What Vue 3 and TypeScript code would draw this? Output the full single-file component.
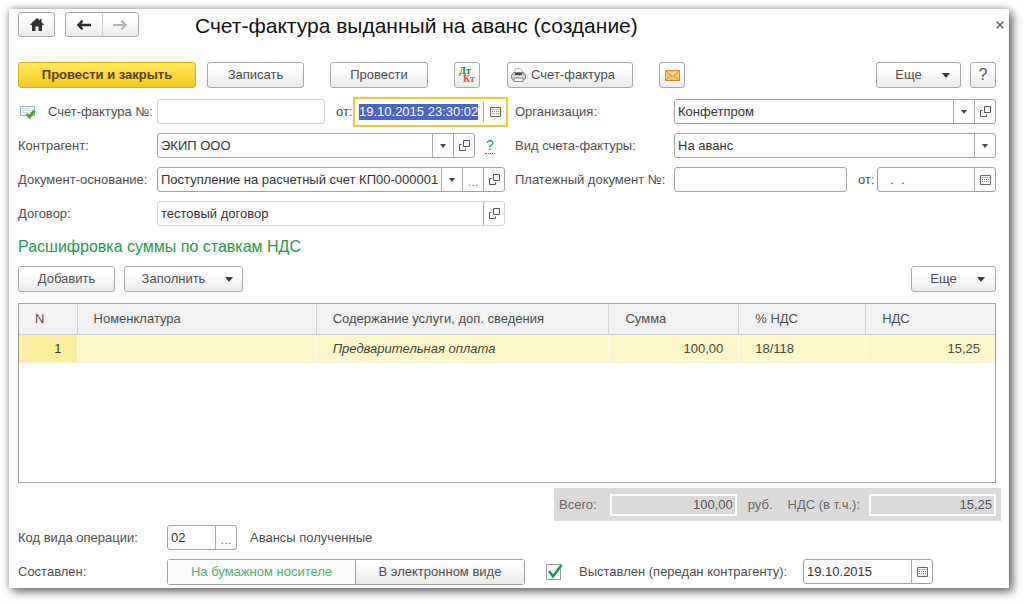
<script setup lang="ts">
import { onMounted, ref } from 'vue'

interface Row {
  n: number
  item: string
  content: string
  sum: string
  rate: string
  vat: string
}

const rows: Row[] = [
  { n: 1, item: '', content: 'Предварительная оплата', sum: '100,00', rate: '18/118', vat: '15,25' },
]

const invoiceNo = ref('')
const invoiceDate = ref('19.10.2015 23:30:02')
const organization = ref('Конфетпром')
const partner = ref('ЭКИП ООО')
const kind = ref('На аванс')
const basis = ref('Поступление на расчетный счет КП00-000001 от 19.10.2015')
const paymentNo = ref('')
const paymentDate = ref('  .  .')
const contract = ref('тестовый договор')
const opCode = ref('02')
const medium = ref('paper')
const issued = ref(true)
const issuedDate = ref('19.10.2015')

const dateInput = ref<HTMLInputElement | null>(null)

onMounted(() => {
  dateInput.value?.focus()
  dateInput.value?.select()
})
</script>

<template>
  <svg class="sprite" width="0" height="0" aria-hidden="true">
    <symbol id="i-open" viewBox="0 0 11 11">
      <path d="M4.5 .5h6v6h-6z M2.500 4.500h-2v6h6v-2" fill="none" stroke="#555" />
    </symbol>
    <symbol id="i-calendar" viewBox="0 0 11 10">
      <path d="M.5 .5h10v9H.5z" fill="#fff" stroke="#666" />
      <path d="M1 2.500h9" stroke="#bbb" />
      <path d="M2 4.500h7M2 6.500h7" stroke="#777" stroke-dasharray="1 1" />
    </symbol>
    <symbol id="i-drop" viewBox="0 0 6 4">
      <path d="M0 0h6L3 4z" fill="#444" />
    </symbol>
    <symbol id="i-caret" viewBox="0 0 8 5">
      <path d="M0 0h8L4 5z" fill="#3a3a3a" />
    </symbol>
  </svg>

  <main class="window">
    <header class="head">
      <button class="btn home" type="button" aria-label="Начальная страница">
        <svg width="14" height="13" viewBox="0 0 14 13">
          <path d="M7 0 0 6.500l1 1L2 6.700V13h3.500V8.500h3V13H12V6.700l1 .8 1-1-2.500-2.300V1H9.800v1.600z" fill="#333" />
        </svg>
      </button>
      <div class="history">
        <button type="button" aria-label="Назад">
          <svg width="14" height="10" viewBox="0 0 14 10">
            <path d="M5.500 .7 1.500 5l4 4.300M1.500 5H14" fill="none" stroke="#2b2b2b" stroke-width="2.500" />
          </svg>
        </button>
        <button type="button" aria-label="Вперед">
          <svg width="14" height="10" viewBox="0 0 14 10">
            <path d="M8.500 .7 12.500 5l-4 4.300M12.500 5H0" fill="none" stroke="#b5b5b5" stroke-width="2.200" />
          </svg>
        </button>
      </div>
      <h1>Счет-фактура выданный на аванс (создание)</h1>
      <button class="close" type="button" aria-label="Закрыть">
        <svg width="8" height="8" viewBox="0 0 8 8">
          <path d="M.7 .7l6.600 6.600M7.300 .7.7 7.300" stroke="#555" stroke-width="1.300" />
        </svg>
      </button>
    </header>

    <div class="body">
      <div class="toolbar">
        <button class="btn primary" type="button">Провести и закрыть</button>
        <button class="btn save" type="button">Записать</button>
        <button class="btn post" type="button">Провести</button>
        <button class="btn square" type="button" aria-label="Проводки Дт Кт">
          <svg width="18" height="18" viewBox="0 0 18 18" font-family="Liberation Serif, serif" font-weight="bold" font-size="10">
            <text x="1" y="8" fill="#1d8a1d">Дт</text>
            <text x="5" y="16" fill="#f04848">Кт</text>
          </svg>
        </button>
        <button class="btn print" type="button">
          <svg width="15" height="14" viewBox="0 0 15 14">
            <path d="M4 .5h5l2 2V6H4z" fill="#fff" stroke="#b5b5b5" />
            <path d="M.5 7 2.500 4.500h10l2 2.500v3.500l-2 1.500h-10l-2-1.500z" fill="#c4c0bc" stroke="#8b8783" />
            <path d="M4 6h7" stroke="#4b4744" stroke-width="2" />
            <path d="M1 8.500h13" stroke="#e9e5e0" />
            <path d="M3.500 10h8l1 3.500h-10z" fill="#f8f8f8" stroke="#8f8f8f" />
          </svg>
          Счет-фактура
        </button>
        <button class="btn square" type="button" aria-label="Отправить по почте">
          <svg width="15" height="11" viewBox="0 0 15 11">
            <path d="M.5 .5h14v10H.5z" fill="#f9cb62" stroke="#c98a25" />
            <path d="M1 10l5-4.500M14 10 9 5.500" stroke="#d9982f" />
            <path d="M1 1l6.500 5.500L14 1z" fill="#fee6a1" stroke="#d9982f" />
          </svg>
        </button>
        <span class="spacer"></span>
        <button class="btn more" type="button">Еще <svg width="8" height="5"><use href="#i-caret" /></svg></button>
        <button class="btn square help" type="button">?</button>
      </div>

      <div class="form">
        <div class="line">
          <span class="label with-icon">
            <svg width="16" height="14" viewBox="0 0 16 14">
              <path d="M.5 1.500h14v9H.5z" fill="#f3f7f9" stroke="#9bb0bd" />
              <path d="M2 3.500h9M2 5.500h8M2 7.500h5" stroke="#d5e0e6" />
              <path d="M6.500 9 9.500 12 14.500 5.500" fill="none" stroke="#4fa32f" stroke-width="3" />
            </svg>
            <label for="no">Счет-фактура №:</label>
          </span>
          <span class="field dim number"><input id="no" v-model="invoiceNo" type="text" /></span>
          <label class="from" for="date">от:</label>
          <span class="focus">
            <input id="date" ref="dateInput" v-model="invoiceDate" type="text" />
            <button type="button" aria-label="Выбрать дату"><svg width="11" height="10"><use href="#i-calendar" /></svg></button>
          </span>
        </div>
        <div class="line">
          <label class="label wide" for="org">Организация:</label>
          <span class="field">
            <input id="org" v-model="organization" type="text" />
            <button type="button" aria-label="Список организаций"><svg width="6" height="4"><use href="#i-drop" /></svg></button>
            <button type="button" aria-label="Открыть организацию"><svg width="11" height="11"><use href="#i-open" /></svg></button>
          </span>
        </div>

        <div class="line">
          <label class="label" for="partner">Контрагент:</label>
          <span class="field">
            <input id="partner" v-model="partner" type="text" />
            <button type="button" aria-label="Список контрагентов"><svg width="6" height="4"><use href="#i-drop" /></svg></button>
            <button type="button" aria-label="Открыть контрагента"><svg width="11" height="11"><use href="#i-open" /></svg></button>
          </span>
          <span class="hint"><a href="#">?</a></span>
        </div>
        <div class="line">
          <label class="label wide" for="kind">Вид счета-фактуры:</label>
          <span class="field">
            <select id="kind" v-model="kind"><option>На аванс</option></select>
            <span class="arrow"><svg width="6" height="4"><use href="#i-drop" /></svg></span>
          </span>
        </div>

        <div class="line">
          <label class="label" for="basis">Документ-основание:</label>
          <span class="field">
            <input id="basis" v-model="basis" type="text" />
            <button type="button" aria-label="Список документов"><svg width="6" height="4"><use href="#i-drop" /></svg></button>
            <button class="dots" type="button" aria-label="Выбрать документ">...</button>
            <button type="button" aria-label="Открыть документ"><svg width="11" height="11"><use href="#i-open" /></svg></button>
          </span>
        </div>
        <div class="line">
          <label class="label wide" for="payno">Платежный документ №:</label>
          <span class="field"><input id="payno" v-model="paymentNo" type="text" /></span>
          <label class="from" for="paydate">от:</label>
          <span class="field paydate">
            <input id="paydate" v-model="paymentDate" type="text" />
            <button type="button" aria-label="Выбрать дату платежа"><svg width="11" height="10"><use href="#i-calendar" /></svg></button>
          </span>
        </div>

        <div class="line">
          <label class="label" for="contract">Договор:</label>
          <span class="field dim">
            <input id="contract" v-model="contract" type="text" />
            <button type="button" aria-label="Открыть договор"><svg width="11" height="11"><use href="#i-open" /></svg></button>
          </span>
        </div>
      </div>

      <h2>Расшифровка суммы по ставкам НДС</h2>

      <div class="toolbar">
        <button class="btn add" type="button">Добавить</button>
        <button class="btn fill" type="button">Заполнить <svg width="8" height="5"><use href="#i-caret" /></svg></button>
        <span class="spacer"></span>
        <button class="btn more" type="button">Еще <svg width="8" height="5"><use href="#i-caret" /></svg></button>
      </div>

      <div class="grid">
        <table>
          <colgroup>
            <col class="c-n" /><col class="c-item" /><col class="c-content" />
            <col class="c-sum" /><col class="c-rate" /><col class="c-vat" />
          </colgroup>
          <thead>
            <tr>
              <th>N</th>
              <th>Номенклатура</th>
              <th>Содержание услуги, доп. сведения</th>
              <th>Сумма</th>
              <th>% НДС</th>
              <th>НДС</th>
            </tr>
          </thead>
          <tbody>
            <tr v-for="row in rows" :key="row.n">
              <td class="num current">{{ row.n }}</td>
              <td>{{ row.item }}</td>
              <td class="italic">{{ row.content }}</td>
              <td class="num">{{ row.sum }}</td>
              <td>{{ row.rate }}</td>
              <td class="num">{{ row.vat }}</td>
            </tr>
          </tbody>
        </table>
      </div>
    </div>

    <div class="totals">
      <label for="total">Всего:</label>
      <input id="total" class="t-sum" type="text" value="100,00" readonly />
      <span class="rub">руб.</span>
      <label for="vat">НДС (в т.ч.):</label>
      <input id="vat" class="t-vat" type="text" value="15,25" readonly />
    </div>

    <div class="footer">
      <div class="line">
        <label class="label foot" for="code">Код вида операции:</label>
        <span class="field code">
          <input id="code" v-model="opCode" type="text" />
          <button class="dots" type="button" aria-label="Выбрать код">...</button>
        </span>
        <span class="note">Авансы полученные</span>
      </div>
      <div class="line">
        <span id="medium" class="label foot">Составлен:</span>
        <div class="segments" role="radiogroup" aria-labelledby="medium">
          <label class="seg"><input v-model="medium" type="radio" value="paper" />На бумажном носителе</label>
          <label class="seg second"><input v-model="medium" type="radio" value="digital" />В электронном виде</label>
        </div>
        <span class="check">
          <input id="issued" v-model="issued" type="checkbox" />
          <svg v-if="issued" width="17" height="17" viewBox="0 0 17 17">
            <path d="M3 8l4 5.500L15.500 2" fill="none" stroke="#10984f" stroke-width="2.500" />
          </svg>
        </span>
        <label class="issued" for="issued">Выставлен (передан контрагенту):</label>
        <span class="field issue-date">
          <input v-model="issuedDate" type="text" aria-label="Дата выставления" />
          <button type="button" aria-label="Выбрать дату выставления"><svg width="11" height="10"><use href="#i-calendar" /></svg></button>
        </span>
      </div>
    </div>
  </main>
</template>

<style>
body {
  background: #fff;
}
</style>

<style scoped>
.sprite {
  position: absolute;
}

.window {
  box-sizing: border-box;
  margin: 9px 15px 15px 9px;
  padding-bottom: 4px;
  background: #fff;
  box-shadow: 4px 4px 9px rgba(0, 0, 0, 0.5), 0 0 7px rgba(0, 0, 0, 0.35);
  color: #4d4d4d;
  font: 13px/16px "Liberation Sans", Arial, sans-serif;
}

.window * {
  box-sizing: border-box;
}

button,
input,
select {
  margin: 0;
  padding: 0;
  border: 0;
  border-radius: 0;
  outline: 0;
  background: none;
  color: inherit;
  font: inherit;
}

svg {
  flex: none;
  display: block;
}

.head {
  display: flex;
  align-items: flex-start;
  padding: 3px 5px 0 9px;
}

.btn {
  display: flex;
  align-items: center;
  justify-content: center;
  flex: none;
  height: 26px;
  border: 1px solid #a8a8a8;
  border-radius: 3px;
  background: linear-gradient(#fff 20%, #ebebeb);
}

.home {
  width: 37px;
  height: 25px;
}

.history {
  display: flex;
  width: 74px;
  height: 25px;
  margin-left: 10px;
  border: 1px solid #a8a8a8;
  border-radius: 3px;
  background: linear-gradient(#fff 20%, #ebebeb);
}

.history button {
  display: flex;
  flex: 1;
  align-items: center;
  justify-content: center;
}

.history button + button {
  border-left: 1px solid #d0d0d0;
}

h1 {
  flex: 1;
  margin: 0 0 0 56px;
  color: #111;
  font-size: 21px;
  font-weight: 400;
  line-height: 28px;
}

.close {
  width: 8px;
  height: 25px;
}

.body {
  padding: 0 13px 0 9px;
}

.toolbar {
  display: flex;
}

.head + .body > .toolbar:first-child {
  margin-top: 22px;
}

.primary {
  width: 178px;
  border-color: #d9ab1f;
  background: linear-gradient(#ffe95e, #f8c91d);
  color: #54430c;
  font-weight: 700;
}

.save {
  width: 97px;
  margin-left: 11px;
}

.post {
  width: 98px;
  margin-left: 26px;
}

.square {
  width: 26px;
  margin-left: 26px;
}

.print {
  gap: 5px;
  width: 126px;
  margin-left: 27px;
  padding-right: 14px;
}

.spacer {
  flex: 1;
}

.more {
  gap: 20px;
  width: 85px;
  padding-left: 8px;
}

.help {
  margin-left: 9px;
  font-size: 16px;
}

.form {
  display: grid;
  grid-template-columns: 487fr 481fr;
  gap: 9px 10px;
  margin-top: 11px;
}

.line {
  display: flex;
  align-items: center;
  min-width: 0;
  height: 25px;
}

.label {
  flex: none;
  width: 139px;
  white-space: nowrap;
}

.label.wide {
  width: 159px;
}

.label.foot {
  width: 149px;
}

.with-icon {
  display: flex;
  align-items: center;
  gap: 12px;
  padding-left: 2px;
}

.field {
  display: flex;
  flex: 1;
  min-width: 0;
  height: 25px;
  border: 1px solid #a0a0a0;
  border-radius: 3px;
  color: #333;
}

.field.dim {
  border-color: #d2d2d2;
}

.field input,
.field select {
  flex: 1;
  width: 0;
  min-width: 0;
  padding: 0 0 0 3px;
  appearance: none;
}

.field button,
.arrow {
  display: flex;
  flex: none;
  align-items: center;
  justify-content: center;
  width: 21px;
  border-left: 1px solid #a8a8a8;
}

.field .dots {
  padding-top: 4px;
  color: #777;
}

.from {
  flex: none;
  width: 30px;
  padding-left: 11px;
}

.focus {
  display: flex;
  flex: none;
  align-self: center;
  width: 155px;
  height: 30px;
  margin: 0 -3px 0 -2px;
  padding: 3px 0;
  border: 2px solid #efc93c;
  background: #fff;
}

.focus input {
  flex: 1;
  width: 0;
  min-width: 0;
  padding-left: 4px;
}

.focus input::selection {
  background: #4a63c4;
  color: #fff;
}

.focus button {
  display: flex;
  align-items: center;
  justify-content: center;
  width: 23px;
  border-left: 1px solid #a8a8a8;
}

.hint {
  flex: none;
  width: 30px;
  padding-left: 10px;
}

.hint a {
  padding: 0 1px;
  border-bottom: 1px dotted #1788a8;
  color: #1788a8;
  font-size: 14px;
  text-decoration: none;
}

.paydate {
  flex: none;
  width: 119px;
}

.field.paydate input {
  padding-left: 5px;
  white-space: pre;
}

h2 {
  margin: 10px 0 9px;
  color: #1a9c4c;
  font-size: 16px;
  font-weight: 400;
  line-height: 21px;
}

.add {
  width: 97px;
}

.fill {
  gap: 20px;
  width: 119px;
  margin-left: 9px;
  padding-left: 8px;
}

.grid {
  min-height: 180px;
  margin-top: 11px;
  border: 1px solid #a0a0a0;
}

table {
  width: 100%;
  border-collapse: separate;
  border-spacing: 0;
  table-layout: fixed;
}

.c-n { width: 6%; }
.c-item { width: 24.5%; }
.c-content { width: 30%; }
.c-sum { width: 13.3%; }
.c-rate { width: 13%; }
.c-vat { width: 13.2%; }

th {
  height: 31px;
  padding: 0 16px;
  border-right: 1px solid #d0d0d0;
  border-bottom: 1px solid #d0d0d0;
  background: #f2f2f2;
  font-weight: 400;
  text-align: left;
  white-space: nowrap;
}

th:last-child {
  border-right: 0;
}

td {
  height: 28px;
  padding: 0 15px 0 16px;
  border-right: 1px solid #fffbe6;
  border-bottom: 1px solid #f6f0cf;
  background: #fdf7cc;
  color: #444;
}

td:last-child {
  border-right: 0;
}

.num {
  text-align: right;
}

.current {
  background: #fbee9c;
  color: #333;
}

.italic {
  font-style: italic;
}

.totals {
  display: flex;
  align-items: center;
  width: fit-content;
  height: 33px;
  margin: 5px 8px 0 auto;
  padding: 0 5px 0 5px;
  background: #dadada;
  color: #666;
}

.totals input {
  height: 22px;
  padding-right: 2px;
  border: 2px solid #fff;
  color: #555;
  text-align: right;
}

.t-sum {
  width: 127px;
  margin-left: 13px;
}

.rub {
  margin: 0 15px 0 11px;
}

.t-vat {
  width: 127px;
  margin-left: 9px;
}

.footer {
  display: grid;
  gap: 9px;
  padding: 4px 13px 0 9px;
}

.code {
  flex: none;
  width: 70px;
}

.note {
  margin-left: 13px;
}

.segments {
  display: flex;
  height: 26px;
  border: 1px solid #a0a0a0;
  border-radius: 3px;
}

.seg {
  display: flex;
  align-items: center;
  justify-content: center;
  width: 187px;
  background: linear-gradient(#fff, #ebebeb);
}

.seg input {
  width: 0;
  appearance: none;
}

.seg:has(input:checked) {
  background: #fafafa;
  color: #4bb375;
}

.second {
  width: 169px;
  border-left: 1px solid #a0a0a0;
}

.check {
  position: relative;
  width: 16px;
  height: 16px;
  margin-left: 21px;
}

.check input {
  display: block;
  width: 15px;
  height: 16px;
  border: 1px solid #9a9a9a;
  appearance: none;
}

.check svg {
  position: absolute;
  top: -1px;
  left: 0;
  pointer-events: none;
}

.issued {
  flex: none;
  width: 241px;
  padding-left: 17px;
  white-space: nowrap;
}

.issue-date {
  flex: none;
  width: 130px;
}
</style>
